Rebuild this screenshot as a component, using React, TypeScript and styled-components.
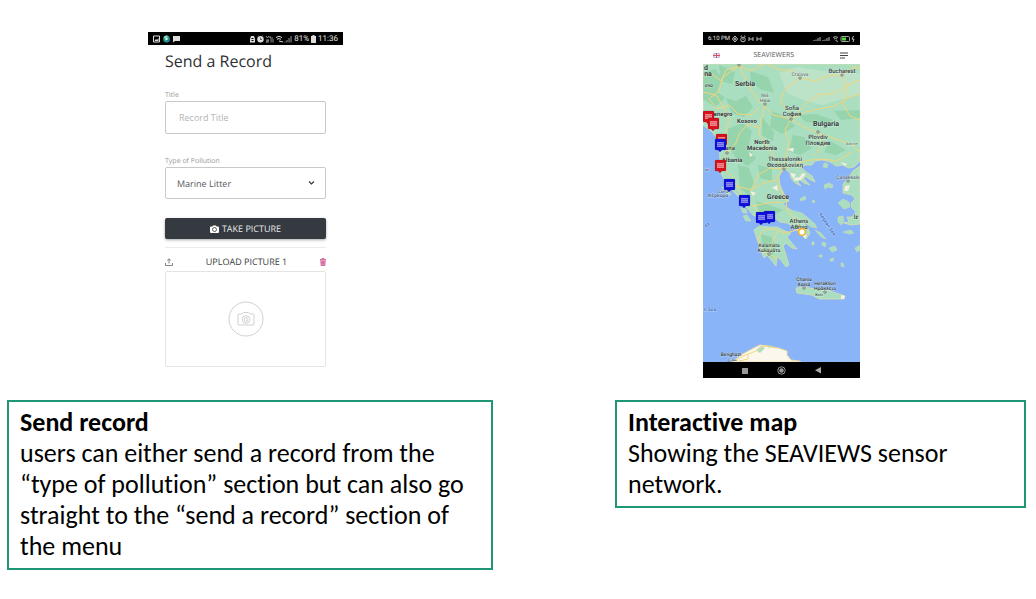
import React from "react";
import styled, { createGlobalStyle } from "styled-components";

const Global = createGlobalStyle`
  *, *::before, *::after { box-sizing: border-box; }
  body { margin: 0; background: #fff; color: #000; font-family: "Open Sans", "Noto Sans", sans-serif; }
`;

const Page = styled.main`
  display: grid;
  grid-template-columns: minmax(0, 486fr) minmax(0, 411fr);
  column-gap: 122px;
  align-items: start;
  padding: 32px 10px 24px 7px;
`;

const Feature = styled.section`
  display: flex;
  flex-direction: column;
  gap: 22px;
`;

const Caption = styled.div`
  border: 2px solid #1f9777;
  padding: 5px 11px 6px;
  font-family: Carlito, Lato, "Liberation Sans", sans-serif;
  font-size: 26px;
  line-height: 31px;
  font-variant-ligatures: none;
`;

const CaptionTitle = styled.h2`
  margin: 0;
  font-size: inherit;
  font-weight: 700;
`;

const CaptionText = styled.p`
  margin: 0;
`;

const Phone = styled.div<{ $width: number; $indent: number }>`
  display: flex;
  flex-direction: column;
  width: ${(p) => p.$width}px;
  min-height: 346px;
  margin-left: ${(p) => p.$indent}px;
`;

const StatusBar = styled.div<{ $size: number }>`
  display: flex;
  align-items: center;
  justify-content: space-between;
  height: 13px;
  padding: 0 5px;
  background: #000;
  color: #e4e4e4;
  font-family: Roboto, sans-serif;
  font-size: ${(p) => p.$size}px;
  line-height: 13px;
  white-space: nowrap;
  text-rendering: geometricPrecision;
`;

const StatusGroup = styled.span`
  display: flex;
  align-items: center;
  gap: 2px;
`;

const Form = styled.form`
  display: flex;
  flex-direction: column;
  padding: 5px 17px 0;
  color: #3a3c40;
`;

const FormTitle = styled.h1`
  margin: 0 0 19px;
  font-size: 16px;
  font-weight: 400;
  line-height: 22px;
  color: #2e3034;
  text-rendering: geometricPrecision;
`;

const Field = styled.div`
  display: flex;
  flex-direction: column;
  margin-bottom: 23px;
`;

const Label = styled.label`
  font-size: 7px;
  line-height: 10px;
  color: #999;
  text-rendering: geometricPrecision;
`;

const TextInput = styled.input`
  width: 100%;
  height: 33px;
  padding: 0 13px;
  border: 1px solid #c9c9c9;
  border-radius: 2px;
  background: #fff;
  font: 9px "Open Sans", sans-serif;
  &::placeholder { color: #b4b4b4; opacity: 1; }
`;

const SelectWrap = styled.div`
  position: relative;
`;

const Select = styled.select`
  display: block;
  width: 100%;
  height: 32px;
  padding: 0 11px;
  border: 1px solid #c9c9c9;
  border-radius: 2px;
  background: #fff;
  color: #55575a;
  font: 9px "Open Sans", sans-serif;
  text-rendering: geometricPrecision;
  appearance: none;
`;

const Chevron = styled.svg`
  position: absolute;
  top: 13px;
  right: 11px;
  pointer-events: none;
`;

const TakeButton = styled.button`
  display: flex;
  align-items: center;
  justify-content: center;
  gap: 3px;
  height: 21px;
  margin: -4px 0 8px;
  padding: 0;
  border: 0;
  border-radius: 2px;
  background: #343a40;
  box-shadow: 0 1px 3px rgba(0, 0, 0, 0.35);
  color: #e8e8e8;
  font: 9px "Open Sans", sans-serif;
  text-rendering: geometricPrecision;
`;

const UploadBar = styled.div`
  display: flex;
  align-items: center;
  justify-content: space-between;
  height: 24px;
  padding-top: 5px;
  border-top: 1px solid #ececec;
  font-size: 9px;
  line-height: 14px;
  text-rendering: geometricPrecision;
`;

const IconButton = styled.button`
  display: flex;
  padding: 0;
  border: 0;
  background: none;
`;

const Preview = styled.div`
  display: flex;
  align-items: center;
  justify-content: center;
  height: 96px;
  border: 1px solid #e4e4e4;
  border-radius: 2px;
`;

const AppBar = styled.header`
  display: grid;
  grid-template-columns: 3fr auto 4fr;
  align-items: center;
  height: 19px;
  padding: 2px 12px 0 10px;
  font-size: 7px;
  line-height: 10px;
  color: #55575a;
  text-rendering: geometricPrecision;
`;

const MenuButton = styled(IconButton)`
  justify-self: end;
`;

const NavBar = styled.nav`
  display: flex;
  align-items: center;
  justify-content: center;
  gap: 28px;
  height: 16px;
  background: #000;
`;

const MapArt = styled.svg`
  display: block;
  width: 100%;
  height: auto;
  text-rendering: geometricPrecision;
`;

type Place = { x: number; y: number; t: string; s?: number; c?: string; b?: boolean; r?: number };

const places: Place[] = [
  { x: 3, y: 6, t: "d", s: 7, b: true },
  { x: 5, y: 12, t: "na", s: 7, b: true },
  { x: 6, y: 23, t: "evo", s: 5 },
  { x: 42, y: 22, t: "Serbia", s: 7, b: true },
  { x: 97, y: 12, t: "Craiova", s: 5, c: "#6d7b76" },
  { x: 139, y: 9, t: "Bucharest", s: 6 },
  { x: 62, y: 33, t: "Niš", s: 5, c: "#6d7b76" },
  { x: 62, y: 38, t: "Ниш", s: 5, c: "#6d7b76" },
  { x: 89, y: 46, t: "Sofia", s: 6 },
  { x: 89, y: 52, t: "София", s: 6 },
  { x: 19, y: 52, t: "tenegro", s: 6, b: true },
  { x: 44, y: 59, t: "Kosovo", s: 6, b: true },
  { x: 123, y: 62, t: "Bulgaria", s: 7, b: true },
  { x: 115, y: 75, t: "Plovdiv", s: 6 },
  { x: 115, y: 81, t: "Пловдив", s: 6 },
  { x: 149, y: 81, t: "Edirne", s: 4, c: "#6d7b76" },
  { x: 59, y: 80, t: "North", s: 6, b: true },
  { x: 59, y: 86, t: "Macedonia", s: 6, b: true },
  { x: 27, y: 86, t: "ana", s: 6 },
  { x: 29, y: 98, t: "Albania", s: 6, b: true },
  { x: 82, y: 97, t: "Thessaloniki", s: 6 },
  { x: 82, y: 103, t: "Θεσσαλονίκη", s: 6 },
  { x: 145, y: 115, t: "Çanakkale", s: 5, c: "#5d6b76" },
  { x: 20, y: 129, t: "Corfu", s: 4, c: "#4d5e78" },
  { x: 15, y: 133, t: "Κέρκυρα", s: 5, c: "#4d5e78" },
  { x: 75, y: 135, t: "Greece", s: 7, b: true },
  { x: 153, y: 155, t: "İz", s: 6 },
  { x: 96, y: 159, t: "Athens", s: 6 },
  { x: 96, y: 165, t: "Αθήνα", s: 6 },
  { x: 66, y: 183, t: "Kalamata", s: 5 },
  { x: 66, y: 188, t: "Καλαμάτα", s: 5 },
  { x: 101, y: 217, t: "Chania", s: 5 },
  { x: 101, y: 222, t: "Χανιά", s: 5 },
  { x: 122, y: 221, t: "Heraklion", s: 5 },
  { x: 122, y: 226, t: "Ηράκλειο", s: 5 },
  { x: 116, y: 232, t: "Kriti", s: 4 },
  { x: 28, y: 292, t: "Benghazi", s: 5 },
  { x: 29, y: 297, t: "بنغازي", s: 4 },
  { x: 7, y: 247, t: "n Sea", s: 5, c: "#356bc0" },
  { x: 123, y: 161, t: "Aegean Sea", s: 5, c: "#356bc0", r: 56 },
  { x: 5, y: 162, t: "ea", s: 5, c: "#356bc0", r: -35 },
  { x: 4, y: 107, t: "isi", s: 4, c: "#4d5e78" },
];

const dots: [number, number][] = [
  [36, 1], [97, 14], [139, 11], [62, 40], [88, 55], [115, 68], [24, 89], [81, 105], [145, 117], [66, 190], [101, 224], [122, 228],
];

const pins: [number, number, string][] = [
  [5, 60, "#d8121d"], [10, 67, "#d8121d"], [18, 83, "#d8121d"], [17, 88, "#1010dc"], [17, 109, "#d8121d"],
  [26, 128, "#1010dc"], [41, 144, "#1010dc"], [66, 160, "#1010dc"], [58, 161, "#1010dc"],
];

const roads = [
  "M0 12L9 10 18 17 23 6 36 2 48 7 62 0", "M36 2L42 14 48 26 55 36 62 42 70 51 88 55 101 63 115 69 130 74 149 81 157 88",
  "M36 2L20 13 16 27 6 35 14 45 26 41 35 50 48 51 57 43", "M62 42L58 56 56 70 63 81 72 94 81 105",
  "M88 55L82 66 86 79 83 90 81 105", "M88 55L102 48 116 45 132 42 145 34 157 30", "M97 14L82 25 77 38 87 47",
  "M97 14L112 17 124 12 139 11 150 3 157 4", "M97 14L88 6 76 6 65 0", "M139 11L144 24 140 40 147 52 157 56",
  "M24 89L33 79 36 70 45 60 56 64", "M24 89L21 105 29 112 34 122 48 126 60 119 73 116",
  "M81 105L94 99 108 96 121 95 134 97 149 88", "M81 105L74 113 76 124 83 135 84 147 93 156 98 165",
  "M34 122L39 133 50 142 58 150 66 149", "M60 166L70 165 82 169 98 165", "M74 168L69 179 66 190 74 194",
  "M60 166L55 175 60 187 66 190", "M50 142L64 139 78 138", "M48 126L55 111 67 104 81 105",
  "M115 69L119 81 112 91", "M0 28L13 31 20 42 27 56 22 68 24 89", "M157 16L143 22 130 30 117 30 104 39 88 55",
];

const greens = [
  "M0 9L12 5 19 14 14 28 22 34 12 43 0 35Z", "M16 1L32 8 29 20 18 17Z", "M23 34L33 37 43 32 50 43 41 53 29 49Z",
  "M47 7L65 13 71 29 57 25 48 17Z", "M69 47L83 53 92 62 79 70 67 63Z", "M25 65L39 59 49 67 45 83 53 95 44 102 32 93 25 81Z",
  "M90 71L101 73 109 84 97 91 86 87Z", "M95 51L113 50 130 56 122 60 103 58Z", "M35 101L46 104 51 119 46 132 37 124Z",
  "M55 101L69 105 69 117 57 114Z", "M53 137L66 141 80 146 71 151 56 147Z", "M58 170L68 173 73 183 69 194 60 184Z",
  "M127 77L143 86 133 91 121 88Z", "M131 47L157 46 157 54 138 56Z", "M59 53L71 68 70 77 59 71Z",
];

const islands = [
  "M19 123L24 124 28 131 24 130Z", "M38 144L43 145 44 149 40 149Z", "M40 152L44 151 48 157 43 157Z",
  "M84 144L91 147 99 149 104 153 112 160 114 164 108 163 99 156 91 152Z", "M121 99L125 100 124 104 120 103Z", "M121 121L126 119 130 121 129 124 125 123 122 125Z",
  "M135 139L140 135 146 138 147 143 141 145Z", "M135 153L140 152 141 158 138 161 135 158Z",
  "M112 166L118 169 123 175 118 173Z", "M119 178L123 179 122 183 119 181Z", "M126 184L132 182 134 186 129 188Z",
  "M140 168L148 166 151 169 146 170Z", "M109 178L111 178 111 181 109 181Z", "M116 191L119 191 119 193 116 193Z",
  "M127 195L131 194 130 197 127 197Z", "M152 184L157 181 157 186 154 188Z", "M138 199L140 199 141 203 138 202Z",
  "M97 135L102 132 103 135 98 137Z", "M109 137L111 136 112 138 110 139Z",
];

const land =
  "M0 0H157V97L151 103 145 104 140 101 133 102 127 98 119 96 112 97 109 101 102 101 99 104 103 108 109 112 112 118 106 115 102 112 101 115 107 121 101 119 96 115 95 118 98 122 91 118 88 114 87 109 82 105 78 108 76 113 77 121 81 130 86 137 80 139 83 143 91 149 98 155 103 161 107 169 103 175 97 169 91 163 84 159 77 158 71 153 63 152 55 153 50 151 46 146 42 142 36 133 30 127 25 121 20 113 16 105 17 94 16 82 14 74 8 67 0 61Z";

const MapView = () => (
  <MapArt viewBox="0 0 157 298" role="img" aria-label="Map of the sensor network">
    <rect width="157" height="298" fill="#8ab4f8" />
    <g fill="#a9dec0" stroke="#d9dfa6" strokeWidth=".8" strokeLinejoin="round">
      <path d={land} />
      <path d="M51 166L57 162 66 163 74 163 82 167 88 169 84 173 88 178 94 185 89 184 83 179 80 182 83 191 86 201 83 203 78 196 74 193 73 202 69 197 64 191 61 194 58 187 55 178Z" />
      <path d="M93 224L101 223 112 225 124 226 133 229 142 232 141 235 127 235 116 235 109 231 94 229Z" />
      <path d="M157 102L150 107 146 113 140 120 140 129 149 131 152 135 148 139 149 144 153 148 149 153 144 153 146 158 141 159 148 161 157 160Z" />
      {islands.map((d) => <path key={d} d={d} strokeWidth=".5" />)}
    </g>
    <path d="M76 9L95 3 120 7 138 5 157 10V30L140 35 120 41 100 36 84 29Z" fill="#bce3c8" />
    <g fill="#85cc9e" opacity=".55">{greens.map((d) => <path key={d} d={d} />)}</g>
    <g fill="#f4f0df">
      <path d="M87 109L93 110 91 114 97 113 99 109 103 110 98 116 92 117Z" />
      <path d="M46 88L50 91 47 93ZM69 124L74 121 75 127ZM84 85L91 84 90 88ZM138 231L142 232 141 235 138 235ZM47 127L53 129 50 132ZM98 169L104 171 102 175ZM142 122L147 121 145 127 141 127ZM137 98L144 100 142 102Z" />
    </g>
    <path d="M30 298L38 291 49 285 57 281 65 282 75 284 84 287 84 291 88 296 96 297 98 298Z" fill="#fbf7ec" stroke="#f0dda0" />
    <path d="M53 286L58 282 62 284 57 289ZM64 281L70 282 66 284Z" fill="#a9dec0" />
    <path d="M30 298L40 292 53 287 61 282 74 284M45 291V295L36 297" fill="none" stroke="#f5d67c" />
    <g fill="none" stroke="#f3d57b" strokeWidth="1" strokeLinejoin="round">{roads.map((d) => <path key={d} d={d} />)}</g>
    <g fill="#e9f5ec" stroke="#55605b" strokeWidth=".8">{dots.map(([x, y]) => <circle key={`${x}-${y}`} cx={x} cy={y} r="1.2" />)}</g>
    <g fontFamily="Roboto, 'Noto Sans', sans-serif" textAnchor="middle">
      {places.map((p) => (
        <text
          key={`${p.t}-${p.x}`} x={p.x} y={p.y} fontSize={p.s} fontWeight={p.b ? 700 : 500} fill={p.c ?? "#333c3a"}
          stroke="#fff" strokeOpacity=".4" strokeWidth="1" paintOrder="stroke"
          transform={p.r ? `rotate(${p.r} ${p.x} ${p.y})` : undefined}
        >{p.t}</text>
      ))}
    </g>
    {pins.map(([x, y, c]) => (
      <g key={`${x}-${y}`} transform={`translate(${x} ${y})`}>
        <path d="M-4-13H5Q6-13 6-12V-3Q6-2 5-2H2L0 0-2-2H-4Q-5-2-5-3V-12Q-5-13-4-13Z" fill={c} stroke="#000" strokeOpacity=".25" strokeWidth=".5" />
        <path d="M-3-10H4V-5H-3Z" fill="#fff" fillOpacity=".35" />
        <path d="M-3-9.5H4M-3-7.5H4M-3-5.5H4" stroke="#fff" strokeOpacity=".3" strokeWidth=".8" />
      </g>
    ))}
    <circle cx="99" cy="168" r="3.3" fill="#fff" stroke="#f5b52c" strokeWidth="1.5" />
  </MapArt>
);

const Camera = () => (
  <svg width="9" height="8" viewBox="0 0 18 16" aria-hidden="true">
    <path d="M2 3H5L6 1H12L13 3H16Q18 3 18 5V14Q18 16 16 16H2Q0 16 0 14V5Q0 3 2 3Z" fill="#fff" />
    <circle cx="9" cy="9" r="4" fill="none" stroke="#343a40" strokeWidth="1.6" />
  </svg>
);

export default function App() {
  return (
    <>
      <Global />
      <Page>
        <Feature>
          <Phone $width={195} $indent={141}>
            <StatusBar $size={8}>
              <svg width="28" height="8" viewBox="0 0 28 8" aria-hidden="true">
                <path d="M.5 1H6.5V7H.5Z" fill="none" stroke="#ddd" />
                <path d="M1.5 6L3 4 4 5 5.5 3V6Z" fill="#ddd" />
                <circle cx="13.5" cy="4" r="3.4" fill="#2e9e62" />
                <path d="M10.6 2.2A3.4 3.4 0 0 1 15 1L13.5 4Z" fill="#8bd0f2" />
                <path d="M13.5 4L16.9 4A3.4 3.4 0 0 1 14 7.4Z" fill="#1f78c8" />
                <circle cx="13.5" cy="4" r="1.2" fill="#dff3ea" />
                <path d="M20 1H27V6H22L20 7.5Z" fill="#ddd" />
              </svg>
              <StatusGroup>
                <svg width="43" height="8" viewBox="0 0 43 8" aria-hidden="true">
                  <path d="M1 7.5V4L2 1H5L6 4V7.5Z" fill="#ddd" />
                  <path d="M2.5 3.5H4.5M2.5 5.5H4.5" stroke="#000" />
                  <circle cx="11.5" cy="4.2" r="3.2" fill="#ddd" />
                  <path d="M11.5 2.5V4.5H13M8.5 1.5L10 .5M14.5 1.5L13 .5" stroke="#444" fill="none" strokeWidth=".8" />
                  <path d="M17 1L18.5 3 20 1M21 1V3H24M17 5H20L17 7H20M22 4V7.5M24 4V7.5" stroke="#bbb" fill="none" strokeWidth=".8" />
                  <path d="M27 2.5Q30 0 33 2.5M28 4.3Q30 2.8 32 4.3M30 6L34 7" stroke="#ddd" fill="none" />
                  <path d="M36 7.5V6.5M38 7.5V5M40 7.5V3M42 7.5V1" stroke="#999" />
                </svg>
                <span>81%</span>
                <svg width="5" height="8" viewBox="0 0 5 8" aria-hidden="true"><path d="M0 1H1.5V0H3.5V1H5V8H0Z" fill="#ddd" /></svg>
                <span>11:36</span>
              </StatusGroup>
            </StatusBar>
            <Form onSubmit={(e) => e.preventDefault()}>
              <FormTitle>Send a Record</FormTitle>
              <Field>
                <Label htmlFor="title">Title</Label>
                <TextInput id="title" placeholder="Record Title" />
              </Field>
              <Field>
                <Label htmlFor="pollution">Type of Pollution</Label>
                <SelectWrap>
                  <Select id="pollution"><option>Marine Litter</option></Select>
                  <Chevron width="7" height="6" viewBox="0 0 7 6" aria-hidden="true">
                    <path d="M1 1.5L3.5 4 6 1.5" fill="none" stroke="#333" strokeWidth="1.1" />
                  </Chevron>
                </SelectWrap>
              </Field>
              <TakeButton type="button"><Camera />TAKE PICTURE</TakeButton>
              <UploadBar>
                <IconButton type="button" aria-label="Upload">
                  <svg width="8" height="8" viewBox="0 0 8 8"><path d="M.5 5V7.5H7.5V5M4 5.5V1M2.2 2.5L4 .8 5.8 2.5" fill="none" stroke="#666" strokeWidth=".8" /></svg>
                </IconButton>
                <span>UPLOAD PICTURE 1</span>
                <IconButton type="button" aria-label="Delete">
                  <svg width="6" height="8" viewBox="0 0 6 8"><path d="M0 1.5H6M2 1V.5H4V1M.8 2L1.1 7.5H4.9L5.2 2M2.3 3V6.5M3.7 3V6.5" fill="#f0a6c8" stroke="#c94f8a" strokeWidth=".8" /></svg>
                </IconButton>
              </UploadBar>
              <Preview>
                <svg width="36" height="36" viewBox="0 0 36 36" fill="none" stroke="#cfcfcf" aria-hidden="true">
                  <circle cx="18" cy="18" r="17" />
                  <path d="M11 13H14L15.5 11.5H20.5L22 13H25Q26 13 26 14V23Q26 24 25 24H11Q10 24 10 23V14Q10 13 11 13Z" />
                  <circle cx="18" cy="18.5" r="3.8" />
                  <circle cx="18" cy="18.5" r="1.8" />
                </svg>
              </Preview>
            </Form>
          </Phone>
          <Caption>
            <CaptionTitle>Send record</CaptionTitle>
            <CaptionText>users can either send a record from the “type of pollution” section but can also go straight to the “send a record” section of the menu</CaptionText>
          </Caption>
        </Feature>

        <Feature>
          <Phone $width={157} $indent={88}>
            <StatusBar $size={6}>
              <StatusGroup>
                <span>6:10 PM</span>
                <svg width="31" height="8" viewBox="0 0 31 8" fill="none" stroke="#ccc" strokeWidth=".9" aria-hidden="true">
                  <path d="M3 1L5.7 4 3 7 .3 4ZM3 2.5V5.5M1.5 4H4.5" />
                  <circle cx="11" cy="4.5" r="2.3" /><path d="M11 3V5M8.5 1.5L10 .8M13.5 1.5L12 .8" />
                  <path d="M17 2V6M17 4H21M21 2V6M25 2V6M25 4H29M29 2V6" />
                </svg>
              </StatusGroup>
              <svg width="42" height="8" viewBox="0 0 42 8" fill="none" stroke="#ccc" aria-hidden="true">
                <path d="M1 6V5M3 6V4.5M5 6V3M7 6V2M10 6V5M12 6V4.5M14 6V3M16 6V2" strokeWidth=".9" />
                <path d="M20 2.5Q22.5.8 25 2.5M21 4Q22.5 3 24 4M22.5 5.5L25 6.5" strokeWidth=".9" />
                <rect x="28" y="1.5" width="8.5" height="5" rx="1" strokeWidth=".8" />
                <path d="M29 2.5H33V5.5H29Z" fill="#55d83a" stroke="none" />
                <path d="M40.5 1L39 4.2H41L40 7" strokeWidth=".9" />
              </svg>
            </StatusBar>
            <AppBar>
              <svg width="7" height="5" viewBox="0 0 14 10" role="img" aria-label="English">
                <rect width="14" height="10" fill="#7a83bd" />
                <path d="M0 0L14 10M14 0L0 10" stroke="#f3dfe6" strokeWidth="2" />
                <path d="M7 0V10M0 5H14" stroke="#fff" strokeWidth="4" /><path d="M7 0V10M0 5H14" stroke="#de4b62" strokeWidth="2" />
              </svg>
              <span>SEAVIEWERS</span>
              <MenuButton type="button" aria-label="Menu">
                <svg width="8" height="7" viewBox="0 0 8 7"><path d="M0 1H8M0 3.5H8M0 6H5" stroke="#444" strokeWidth="1.2" /></svg>
              </MenuButton>
            </AppBar>
            <MapView />
            <NavBar aria-label="System">
              <IconButton type="button" aria-label="Recent apps"><svg width="8" height="8"><rect x="1" y="2" width="6" height="6" fill="#999" /></svg></IconButton>
              <IconButton type="button" aria-label="Home"><svg width="9" height="9"><circle cx="4.5" cy="4.5" r="3.7" fill="none" stroke="#999" /><circle cx="4.5" cy="4.5" r="2.2" fill="#999" /></svg></IconButton>
              <IconButton type="button" aria-label="Back"><svg width="8" height="8"><path d="M7 1V7.5L1 4.2Z" fill="#aaa" /></svg></IconButton>
            </NavBar>
          </Phone>
          <Caption>
            <CaptionTitle>Interactive map</CaptionTitle>
            <CaptionText>Showing the SEAVIEWS sensor network.</CaptionText>
          </Caption>
        </Feature>
      </Page>
    </>
  );
}
